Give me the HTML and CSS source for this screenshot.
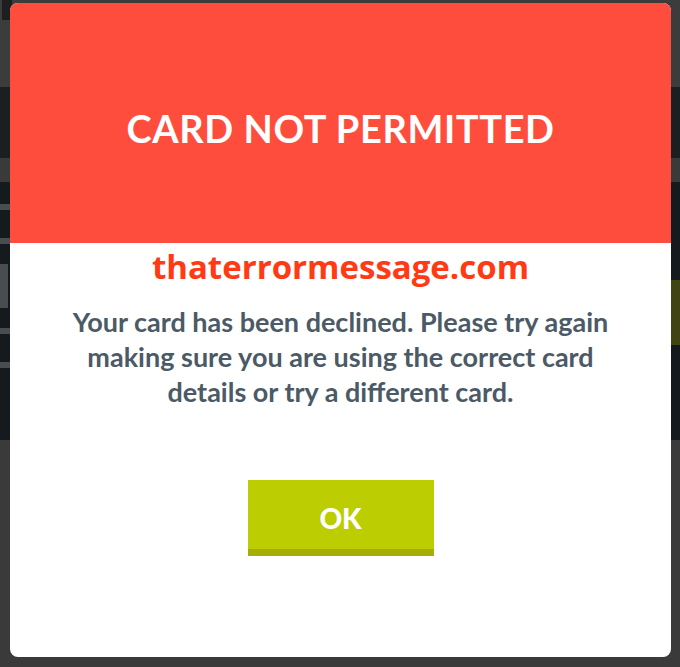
FILE: index.html
```html
<!DOCTYPE html>
<html>
<head>
<meta charset="utf-8">
<link rel="stylesheet" href="styles.css">
</head>
<body>
<div class="backdrop">
  <div class="band band-top"><div class="mark mark-top"></div></div>
  <div class="band band-dark1"></div>
  <div class="band band-gray"></div>
  <div class="band band-dark2">
    <div class="marks">
      <div class="mark mark-c"></div>
      <div class="mark mark-m"></div>
      <div class="mark mark-c"></div>
    </div>
    <div class="olive"></div>
  </div>
  <div class="band band-bottom"></div>
</div>

<div class="modal">
  <div class="modal-head">
    <h1 class="title">CARD NOT PERMITTED</h1>
  </div>
  <div class="modal-body">
    <div class="watermark">thaterrormessage.com</div>
    <p class="message">Your card has been declined. Please try again<br>making sure you are using the correct card<br>details or try a different card.</p>
    <button class="ok">OK</button>
  </div>
</div>
</body>
</html>
```

FILE: styles.css
```css
html, body {
  margin: 0;
  padding: 0;
}
body {
  width: 680px;
  height: 667px;
  overflow: hidden;
  position: relative;
  background: #3a3a3a;
  font-family: Lato, "Liberation Sans", sans-serif;
}
.backdrop {
  display: flex;
  flex-direction: column;
  height: 667px;
}
.band {
  width: 100%;
  position: relative;
  overflow: hidden;
}
.band-top {
  height: 87px;
  background: #3c3c3c;
}
.mark-top {
  position: absolute;
  left: 2px;
  top: 0;
  width: 6px;
  height: 20px;
  background: #1e1e1e;
}
.band-dark1 {
  height: 71px;
  background: #1b1f22;
}
.band-gray {
  height: 24px;
  background: #3a3a3a;
}
.band-dark2 {
  height: 258px;
  background: #151a1e;
}
.marks {
  display: flex;
  flex-direction: column;
  gap: 20px;
  padding-top: 22px;
}
.mark {
  width: 10px;
}
.mark-c {
  height: 40px;
  border-top: 6px solid #4a4d50;
  border-bottom: 6px solid #4a4d50;
  box-sizing: border-box;
}
.mark-m {
  height: 44px;
  width: 8px;
  background: #4a4d50;
}
.olive {
  position: absolute;
  right: 0;
  top: 98px;
  width: 20px;
  height: 65px;
  background: #3f4412;
}
.band-bottom {
  flex: 1;
  background: #3a3a3a;
}

.modal {
  position: absolute;
  left: 10px;
  top: 3px;
  width: 661px;
  height: 654px;
  background: #ffffff;
  border-radius: 8px;
  overflow: hidden;
  display: flex;
  flex-direction: column;
}
.modal-head {
  height: 240px;
  background: #fe4d3c;
  display: flex;
  align-items: center;
  justify-content: center;
}
.title {
  margin: 10px 0 0 0;
  color: #ffffff;
  font-family: Lato, "Liberation Sans", sans-serif;
  font-weight: 700;
  font-size: 38px;
  letter-spacing: 0.6px;
}
.modal-body {
  display: flex;
  flex-direction: column;
  align-items: center;
  padding-top: 4px;
}
.watermark {
  font-family: "Open Sans", "Liberation Sans", sans-serif;
  font-weight: 700;
  font-size: 33px;
  line-height: 40px;
  color: #ff3a14;
}
.message {
  margin: 17px 0 0 0;
  text-align: center;
  color: #4b5a66;
  font-weight: 700;
  font-size: 27px;
  line-height: 35px;
}
.ok {
  margin-top: 71px;
  width: 186px;
  height: 76px;
  border: none;
  border-radius: 0;
  background: #bccd02;
  border-bottom: 7px solid #a6ad05;
  color: #ffffff;
  font-family: Lato, "Liberation Sans", sans-serif;
  font-weight: 900;
  font-size: 28px;
  padding: 7px 0 0 0;
}
```
